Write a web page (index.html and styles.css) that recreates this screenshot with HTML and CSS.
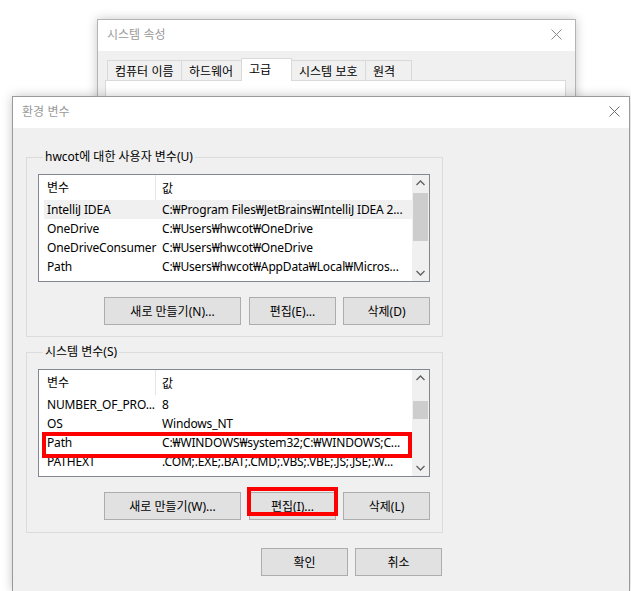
FILE: index.html
```html
<!DOCTYPE html>
<html lang="ko">
<head>
    <meta charset="UTF-8">
    <title>환경 변수</title>
    <link rel="stylesheet" href="styles.css">
</head>
<body>

    <!-- 시스템 속성 (behind) -->
    <div class="window back-window">
        <div class="titlebar">
            <span class="title">시스템 속성</span>
            <svg class="close" width="11" height="11" viewBox="0 0 11 11"><path d="M0.5 0.5 L10.5 10.5 M10.5 0.5 L0.5 10.5" stroke="#8a8a8a" stroke-width="1" fill="none"/></svg>
        </div>
        <div class="win-body">
            <div class="tabs">
                <span class="tab">컴퓨터 이름</span>
                <span class="tab">하드웨어</span>
                <span class="tab active">고급</span>
                <span class="tab">시스템 보호</span>
                <span class="tab">원격</span>
            </div>
            <div class="tab-panel"></div>
        </div>
    </div>

    <!-- 환경 변수 (front) -->
    <div class="window front-window">
        <div class="titlebar">
            <span class="title">환경 변수</span>
            <svg class="close" width="11" height="11" viewBox="0 0 11 11"><path d="M0.5 0.5 L10.5 10.5 M10.5 0.5 L0.5 10.5" stroke="#6b6b6b" stroke-width="1" fill="none"/></svg>
        </div>
        <div class="win-body front-body">

            <fieldset class="group">
                <legend>hwcot에 대한 사용자 변수(U)</legend>
                <div class="listview">
                    <div class="list-main">
                        <div class="list-head">
                            <span class="col-name">변수</span>
                            <span class="col-value">값</span>
                        </div>
                        <div class="list-row selected"><span class="col-name">IntelliJ IDEA</span><span class="col-value">C:₩Program Files₩JetBrains₩IntelliJ IDEA 2...</span></div>
                        <div class="list-row"><span class="col-name">OneDrive</span><span class="col-value">C:₩Users₩hwcot₩OneDrive</span></div>
                        <div class="list-row"><span class="col-name">OneDriveConsumer</span><span class="col-value">C:₩Users₩hwcot₩OneDrive</span></div>
                        <div class="list-row"><span class="col-name">Path</span><span class="col-value">C:₩Users₩hwcot₩AppData₩Local₩Micros...</span></div>
                    </div>
                    <div class="scrollbar">
                        <svg class="arrow" width="17" height="17" viewBox="0 0 17 17"><polyline points="4.5,10 8.5,6 12.5,10" stroke="#606060" stroke-width="1.3" fill="none"/></svg>
                        <div class="track"><div class="thumb user-thumb"></div></div>
                        <svg class="arrow" width="17" height="17" viewBox="0 0 17 17"><polyline points="4.5,7 8.5,11 12.5,7" stroke="#606060" stroke-width="1.3" fill="none"/></svg>
                    </div>
                </div>
                <div class="btn-row">
                    <button class="btn wide">새로 만들기(N)...</button>
                    <button class="btn">편집(E)...</button>
                    <button class="btn">삭제(D)</button>
                </div>
            </fieldset>

            <fieldset class="group system-group">
                <legend>시스템 변수(S)</legend>
                <div class="listview">
                    <div class="list-main">
                        <div class="list-head">
                            <span class="col-name">변수</span>
                            <span class="col-value">값</span>
                        </div>
                        <div class="list-row"><span class="col-name">NUMBER_OF_PRO...</span><span class="col-value">8</span></div>
                        <div class="list-row"><span class="col-name">OS</span><span class="col-value">Windows_NT</span></div>
                        <div class="list-row"><span class="col-name">Path</span><span class="col-value">C:₩WINDOWS₩system32;C:₩WINDOWS;C...</span></div>
                        <div class="list-row"><span class="col-name">PATHEXT</span><span class="col-value">.COM;.EXE;.BAT;.CMD;.VBS;.VBE;.JS;.JSE;.W...</span></div>
                    </div>
                    <div class="scrollbar">
                        <svg class="arrow" width="17" height="17" viewBox="0 0 17 17"><polyline points="4.5,10 8.5,6 12.5,10" stroke="#606060" stroke-width="1.3" fill="none"/></svg>
                        <div class="track"><div class="thumb system-thumb"></div></div>
                        <svg class="arrow" width="17" height="17" viewBox="0 0 17 17"><polyline points="4.5,7 8.5,11 12.5,7" stroke="#606060" stroke-width="1.3" fill="none"/></svg>
                    </div>
                    <div class="mark row-mark"></div>
                </div>
                <div class="btn-row">
                    <button class="btn wide">새로 만들기(W)...</button>
                    <span class="btn-wrap">
                        <button class="btn">편집(I)...</button>
                        <span class="mark btn-mark"></span>
                    </span>
                    <button class="btn">삭제(L)</button>
                </div>
            </fieldset>

            <div class="dialog-buttons">
                <button class="btn">확인</button>
                <button class="btn">취소</button>
            </div>
        </div>
    </div>

</body>
</html>
```

FILE: styles.css
```css
body {
    margin: 0;
    background: #ffffff;
    font-family: "Noto Sans", "Noto Sans CJK KR", sans-serif;
    font-size: 12px;
    color: #000;
    position: relative;
    width: 631px;
    height: 591px;
    overflow: hidden;
}

/* windows */
.window {
    position: absolute;
    box-sizing: border-box;
    background: #f0f0f0;
    box-shadow: 0 0 10px rgba(0, 0, 0, 0.22);
}

.back-window {
    left: 97px;
    top: 19px;
    width: 479px;
    height: 200px;
    border: 1px solid #b4b4b4;
}

.front-window {
    left: 12px;
    top: 96px;
    width: 618px;
    height: 495px;
    border: 1px solid #9a9a9a;
    border-bottom: none;
}

.titlebar {
    height: 31px;
    box-sizing: border-box;
    background: #fff;
    display: flex;
    align-items: center;
    justify-content: space-between;
    padding: 0 9px 3px 9px;
}

.title {
    color: #9a9a9a;
    font-family: "Noto Sans CJK KR", sans-serif;
    line-height: 16px;
}

.back-window .close {
    margin-right: 4px;
}

/* tabs */
.win-body {
    padding: 9px 9px 0 7px;
}

.tabs {
    display: flex;
    padding-left: 2px;
    align-items: flex-end;
    height: 20px;
}

.tab {
    box-sizing: border-box;
    height: 20px;
    line-height: 19px;
    border: 1px solid #d9d9d9;
    border-bottom: none;
    border-left: none;
    padding-left: 7px;
    background: #f0f0f0;
    font-family: "Noto Sans CJK KR", sans-serif;
}

.tab:nth-child(1) {
    width: 75px;
    border-left: 1px solid #d9d9d9;
}

.tab:nth-child(2) {
    width: 60px;
}

.tab:nth-child(4) {
    width: 74px;
}

.tab:nth-child(5) {
    width: 46px;
}

.tab.active {
    width: 51px;
    height: 23px;
    margin-bottom: -1px;
    margin-left: -1px;
    border-left: 1px solid #d9d9d9;
    background: #fff;
    line-height: 20px;
    position: relative;
    z-index: 1;
}

.tab-panel {
    height: 140px;
    background: #fff;
    border: 1px solid #d9d9d9;
}

/* environment variables dialog */
.front-body {
    padding: 21px 0 0 13px;
}

.group {
    margin: 0;
    width: 417px;
    box-sizing: border-box;
    border: 1px solid #dcdcdc;
    padding: 9px 12px 11px 11px;
    min-width: 0;
}

.group legend {
    margin-left: 5px;
    padding: 0 2px;
    line-height: 16px;
    font-family: "Noto Sans", "Noto Sans CJK KR", sans-serif;
}

.system-group {
    margin-top: 7px;
    padding-bottom: 12px;
}

.listview {
    position: relative;
    display: flex;
    height: 108px;
    box-sizing: border-box;
    border: 1px solid #828790;
    background: #fff;
    overflow: hidden;
}

.list-main {
    flex: 1;
    overflow: hidden;
}

.list-head {
    display: flex;
    height: 25px;
    align-items: center;
}

.list-head .col-name {
    width: 108px;
    padding-left: 8px;
    height: 25px;
    line-height: 25px;
    border-right: 1px solid #e5e5e5;
}

.list-head .col-value {
    padding-left: 6px;
}

.list-row {
    display: flex;
    height: 19px;
    line-height: 19px;
    margin-left: 5px;
    white-space: nowrap;
    letter-spacing: -0.15px;
}

.list-row.selected {
    background: #f0f0f0;
}

.list-row .col-name {
    width: 113px;
    padding-left: 3px;
    overflow: hidden;
}

.list-row .col-value {
    padding-left: 2px;
}

.scrollbar {
    width: 17px;
    background: #f0f0f0;
    display: flex;
    flex-direction: column;
}

.arrow {
    display: block;
    flex: none;
}

.track {
    flex: 1;
    position: relative;
}

.thumb {
    position: absolute;
    left: 1px;
    right: 1px;
    background: #cdcdcd;
}

.user-thumb {
    top: 1px;
    height: 48px;
}

.system-thumb {
    top: 14px;
    height: 18px;
}

/* buttons */
.btn-row {
    display: flex;
    justify-content: flex-end;
    gap: 7px;
    margin-top: 15px;
}

.btn {
    width: 87px;
    height: 28px;
    margin: 0;
    padding: 0;
    background: #e1e1e1;
    border: 1px solid #adadad;
    font-family: "Noto Sans", "Noto Sans CJK KR", sans-serif;
    font-size: 12px;
    color: #000;
}

.btn.wide {
    width: 137px;
    margin-right: 1px;
}

.btn-wrap {
    position: relative;
    display: flex;
}

.dialog-buttons {
    width: 417px;
    display: flex;
    justify-content: flex-end;
    gap: 7px;
    margin-top: 15px;
    padding-right: 1px;
    box-sizing: border-box;
}

/* red annotation boxes */
.mark {
    position: absolute;
    border: 4px solid #ff0000;
    box-sizing: border-box;
}

.row-mark {
    left: 3px;
    top: 62px;
    width: 370px;
    height: 26px;
}

.btn-mark {
    left: -2px;
    top: -5px;
    width: 91px;
    height: 29px;
}
```
